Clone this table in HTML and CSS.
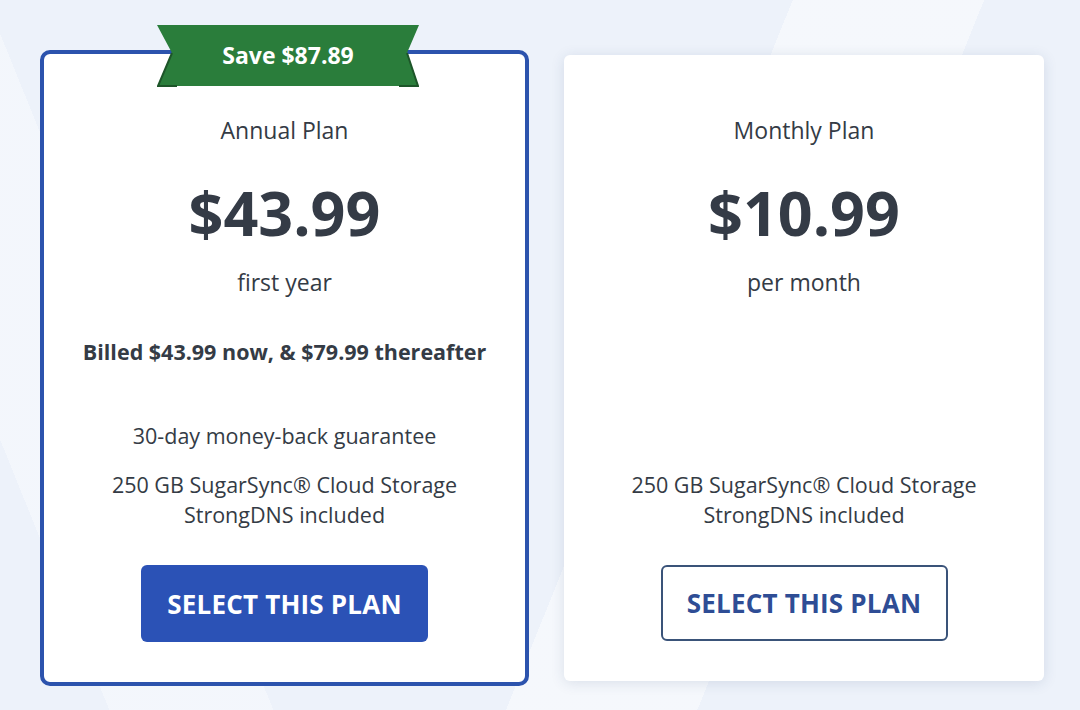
FILE: index.html
```html
<!DOCTYPE html>
<html lang="en">
<head>
<meta charset="utf-8">
<title>Plans</title>
<link rel="stylesheet" href="styles.css">
</head>
<body>
<main class="plans">
  <section class="card card-featured">
    <div class="ribbon">
      <svg class="ribbon-shape" viewBox="0 0 262 62" width="262" height="62" aria-hidden="true">
        <polygon points="0,0 262,0 250,28 261,61 1,61 15,28" fill="#2a7d3b"/>
        <polyline points="15,28 1,61 20,61" fill="none" stroke="#1d5529" stroke-width="2"/>
        <polyline points="250,28 261,61 242,61" fill="none" stroke="#1d5529" stroke-width="2"/>
      </svg>
      <span class="ribbon-text">Save $87.89</span>
    </div>
    <h2 class="plan-name">Annual Plan</h2>
    <div class="price">$43.99</div>
    <div class="period">first year</div>
    <div class="note note-bold">Billed $43.99 now, &amp; $79.99 thereafter</div>
    <div class="note note-guarantee">30-day money-back guarantee</div>
    <ul class="features">
      <li>250 GB SugarSync® Cloud Storage</li>
      <li>StrongDNS included</li>
    </ul>
    <button class="btn btn-primary">SELECT THIS PLAN</button>
  </section>

  <section class="card card-plain">
    <h2 class="plan-name">Monthly Plan</h2>
    <div class="price">$10.99</div>
    <div class="period">per month</div>
    <div class="note note-bold"></div>
    <div class="note note-guarantee"></div>
    <ul class="features">
      <li>250 GB SugarSync® Cloud Storage</li>
      <li>StrongDNS included</li>
    </ul>
    <button class="btn btn-outline">SELECT THIS PLAN</button>
  </section>
</main>
</body>
</html>
```

FILE: styles.css
```css
* { box-sizing: border-box; }

html, body {
  margin: 0;
  height: 100%;
}

body {
  width: 1080px;
  height: 710px;
  overflow: hidden;
  font-family: "Open Sans", "Noto Sans", "Liberation Sans", sans-serif;
  color: #343b45;
  background-color: #edf2fa;
  background-image:
    linear-gradient(112deg, rgba(255,255,255,0) 0 58%, rgba(255,255,255,0.45) 58% 72%, rgba(255,255,255,0) 72%),
    linear-gradient(68deg, rgba(255,255,255,0) 0 8%, rgba(255,255,255,0.35) 8% 20%, rgba(255,255,255,0) 20%);
}

.plans {
  display: flex;
  align-items: flex-start;
  gap: 35px;
  padding: 50px 0 0 40px;
}

.card {
  position: relative;
  display: flex;
  flex-direction: column;
  align-items: center;
  background: #ffffff;
  text-align: center;
  padding: 61px 0 40px;
}

.card-featured {
  width: 489px;
  height: 636px;
  border: 4px solid #2c53ad;
  border-radius: 10px;
}

.card-plain {
  width: 480px;
  height: 626px;
  margin-top: 5px;
  padding-top: 60px;
  border-radius: 6px;
  box-shadow: 0 2px 14px rgba(40, 60, 110, 0.13);
}

.ribbon {
  position: absolute;
  top: -29px;
  left: 113px;
  width: 262px;
  height: 62px;
  display: flex;
  align-items: center;
  justify-content: center;
}

.ribbon-shape {
  position: absolute;
  inset: 0;
}

.ribbon-text {
  position: relative;
  color: #ffffff;
  font-weight: 700;
  font-size: 23px;
  line-height: 30px;
  margin-top: -3px;
}

.plan-name {
  margin: 0;
  font-weight: 400;
  font-size: 23px;
  line-height: 30px;
}

.price {
  margin-top: 33px;
  font-weight: 700;
  font-size: 61px;
  line-height: 70px;
  color: #343b46;
}

.period {
  margin-top: 19px;
  font-size: 23px;
  line-height: 30px;
}

.note {
  min-height: 30px;
  font-size: 21.5px;
  line-height: 30px;
}

.note-bold {
  margin-top: 40px;
  font-weight: 700;
}

.note-guarantee {
  margin-top: 54px;
}

.features {
  list-style: none;
  margin: 19px 0 0;
  padding: 0;
  font-size: 21.5px;
  line-height: 30px;
}

.btn {
  margin-top: 35px;
  width: 287px;
  height: 77px;
  border-radius: 6px;
  font-family: inherit;
  font-weight: 700;
  font-size: 26px;
  letter-spacing: 0.2px;
  cursor: pointer;
}

.btn-primary {
  background: #2b52b6;
  color: #ffffff;
  border: none;
}

.btn-outline {
  background: #ffffff;
  color: #2e4d95;
  border: 2px solid #3a5379;
}
```
